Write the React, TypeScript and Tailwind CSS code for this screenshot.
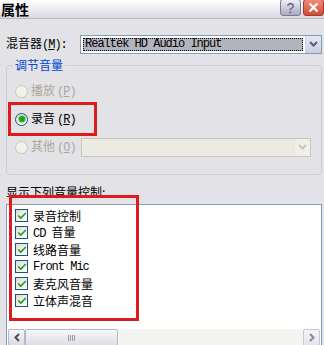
import { Check } from "lucide-react";

const cjk = "font-['Noto_Sans_CJK_SC','Noto_Sans',sans-serif]";
const mono = "font-['Liberation_Mono','DejaVu_Sans_Mono',monospace]";

function Radio({ label, hot, checked, disabled }: { label: string; hot: string; checked?: boolean; disabled?: boolean }) {
  return (
    <div className="flex items-center h-[28px]">
      <div
        className={`w-[13px] h-[13px] rounded-full border flex items-center justify-center ${
          disabled ? "border-[#cac8bb] bg-[#f2f1ea]" : "border-[#1c5180] bg-gradient-to-br from-[#dcdcd5] to-white"
        }`}
      >
        {checked && <div className="w-[6px] h-[6px] rounded-full bg-[#21a121] shadow-[0_0_0_1px_#8fdc8f]" />}
      </div>
      <span className={`ml-[3px] text-[12px] leading-[16px] ${cjk} ${disabled ? "text-[#aca899]" : "text-black"}`}>
        {label}
        <span className={`${mono} text-[12px] tracking-[-1px] ml-[2px]`}>
          (<u>{hot}</u>)
        </span>
      </span>
    </div>
  );
}

function Combo({ disabled, text }: { disabled?: boolean; text?: string }) {
  return (
    <div
      className={`flex items-stretch h-[19px] border ${
        disabled ? "border-[#c9c7ba] bg-[#ebebe4]" : "border-[#7f9db9] bg-white"
      }`}
    >
      <div className="flex-1 p-[2px] flex">
        {text && (
          <div className="flex-1 bg-[#b3b3bb] border border-dotted border-black flex items-center pl-[1px]">
            <span className={`${mono} text-[12px] tracking-[-1px] text-black leading-none`}>{text}</span>
          </div>
        )}
      </div>
      <div
        className={`w-[16px] flex items-center justify-center border-l ${
          disabled ? "border-[#e8e8e0] bg-[#f0efe8]" : "border-[#c3d3fd] bg-gradient-to-b from-[#e6e8f2] to-[#c9cde0]"
        }`}
      >
        <svg width="9" height="6" viewBox="0 0 9 6">
          <path
            d="M1 1l3.5 3.5L8 1"
            fill="none"
            stroke={disabled ? "#c9c7ba" : "#4d6185"}
            strokeWidth="2"
          />
        </svg>
      </div>
    </div>
  );
}

const items = [
  { label: "录音控制" },
  { label: "CD 音量", mixed: true },
  { label: "线路音量" },
  { label: "Front Mic", latin: true },
  { label: "麦克风音量" },
  { label: "立体声混音" },
];

export default function App() {
  return (
    <div className="relative w-[324px] h-[345px] overflow-hidden bg-[#e2e2e7]">
      {/* Title bar */}
      <div className="h-[19px] flex items-center justify-between bg-gradient-to-b from-white to-[#d8d8e0] border-b border-[#b9b9c4]">
        <span className={`${cjk} text-[14px] font-bold leading-[18px] text-black ml-[1px]`}>属性</span>
        <div className="flex gap-[2px] self-start">
          <div className="w-[21px] h-[17px] -mt-[1px] rounded-[3px] border border-[#7a7a95] bg-gradient-to-b from-[#f0f0f6] to-[#a9a9c2] flex items-center justify-center">
            <span className="font-['Liberation_Sans',sans-serif] text-[14px] leading-none text-[#5a5a70]">?</span>
          </div>
          <div className="w-[21px] h-[17px] -mt-[1px] rounded-[3px] border border-[#9a3a30] bg-gradient-to-b from-[#f08a7a] to-[#d44a32] flex items-center justify-center">
            <svg width="11" height="11" viewBox="0 0 11 11">
              <path d="M1.5 1.5l8 8M9.5 1.5l-8 8" stroke="white" strokeWidth="2.2" />
            </svg>
          </div>
        </div>
      </div>

      <div className="pl-[6px] pr-[2px]">
        {/* Mixer row */}
        <div className="mt-[15px] flex items-center">
          <span className={`${cjk} text-[12px] text-black w-[74px]`}>
            混音器
            <span className={`${mono} text-[12px] tracking-[-1px]`}>
              (<u>M</u>):
            </span>
          </span>
          <div className="flex-1">
            <Combo text="Realtek HD Audio Input" />
          </div>
        </div>

        {/* Group box */}
        <fieldset className="mt-[2px] h-[119px] border border-[#cfcfc6] rounded-[3px]">
          <legend className={`${cjk} ml-[6px] px-[2px] text-[12px] leading-[18px] text-[#0046d5]`}>调节音量</legend>
          <div className="pl-[8px] pt-[3px] pr-[10px]">
            <Radio label="播放" hot="P" disabled />
            <Radio label="录音" hot="R" checked />
            <div className="flex items-center">
              <div className="w-[66px]">
                <Radio label="其他" hot="O" disabled />
              </div>
              <div className="flex-1">
                <Combo disabled />
              </div>
            </div>
          </div>
        </fieldset>

        {/* List */}
        <div className={`${cjk} mt-[8px] text-[12px] leading-[18px] text-black`}>显示下列音量控制:</div>
        <div className="mt-[3px] h-[150px] border border-[#7f9db9] bg-white">
          <div className="pl-[8px] pt-[2px]">
            {items.map((it) => (
              <div key={it.label} className="flex items-center h-[17px]">
                <div className="w-[13px] h-[13px] border border-[#1c5180] bg-gradient-to-br from-[#dcdcd5] to-white flex items-center justify-center">
                  <Check className="w-[10px] h-[10px] text-[#21a121]" strokeWidth={4} />
                </div>
                <span className={`ml-[5px] leading-[16px] text-black ${it.latin ? `${mono} text-[12px] tracking-[-1px]` : `${cjk} text-[12px]`}`}>
                  {it.mixed ? (
                    <>
                      <span className={`${mono} text-[12px] tracking-[-1px]`}>CD </span>
                      音量
                    </>
                  ) : (
                    it.label
                  )}
                </span>
              </div>
            ))}
          </div>

          {/* Horizontal scrollbar */}
          <div className="mt-[20px] mx-[1px] h-[17px] flex bg-[#f4f4f0]">
            <div className="w-[17px] h-[17px] rounded-[2px] border border-[#b8b8c4] bg-gradient-to-b from-[#f6f6f8] to-[#dcdce2] flex items-center justify-center">
              <svg width="6" height="9" viewBox="0 0 6 9">
                <path d="M5 1L1.5 4.5 5 8" fill="none" stroke="#4d4d60" strokeWidth="2" />
              </svg>
            </div>
            <div className="w-[93px] h-[17px] rounded-[2px] border border-[#b8b8c4] bg-gradient-to-b from-[#f8f8fa] to-[#dedee4] flex items-center justify-center gap-[1px]">
              <div className="w-px h-[6px] bg-[#9a9aa8]" />
              <div className="w-px h-[6px] bg-[#9a9aa8]" />
              <div className="w-px h-[6px] bg-[#9a9aa8]" />
              <div className="w-px h-[6px] bg-[#9a9aa8]" />
            </div>
            <div className="flex-1" />
            <div className="w-[17px] h-[17px] rounded-[2px] border border-[#c8c8d0] bg-gradient-to-b from-[#f6f6f8] to-[#e4e4ea] flex items-center justify-center">
              <svg width="6" height="9" viewBox="0 0 6 9">
                <path d="M1 1l3.5 3.5L1 8" fill="none" stroke="#8a8a98" strokeWidth="2" />
              </svg>
            </div>
          </div>
        </div>
      </div>

      {/* Red annotation boxes */}
      <div className="absolute left-[8px] top-[102px] w-[89px] h-[34px] border-[3px] border-[#dc1c1c]" />
      <div className="absolute left-[9px] top-[195px] w-[130px] h-[126px] border-[3px] border-[#dc1c1c]" />
    </div>
  );
}
